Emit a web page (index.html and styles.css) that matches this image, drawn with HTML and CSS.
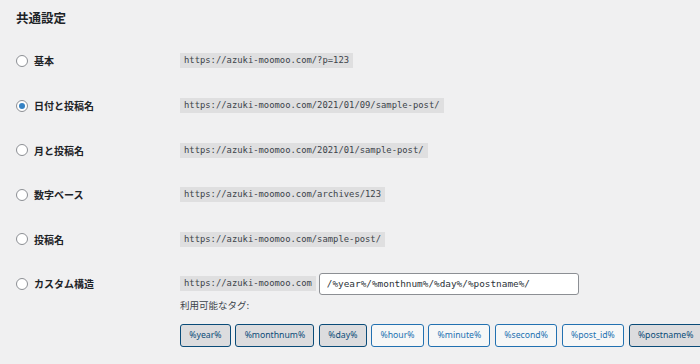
FILE: index.html
```html
<!DOCTYPE html>
<html lang="ja">

<head>
  <meta charset="UTF-8">
  <meta name="viewport" content="width=device-width, initial-scale=1.0">
  <title>パーマリンク設定</title>
  <link rel="stylesheet" href="styles.css">
</head>

<body>
  <div class="main">
    <h2 class="title">共通設定</h2>

    <div class="row">
      <label class="choice"><input type="radio" name="permalink">基本</label>
      <div class="value"><code>https://azuki-moomoo.com/?p=123</code></div>
    </div>

    <div class="row">
      <label class="choice"><input type="radio" name="permalink" checked>日付と投稿名</label>
      <div class="value"><code>https://azuki-moomoo.com/2021/01/09/sample-post/</code></div>
    </div>

    <div class="row">
      <label class="choice"><input type="radio" name="permalink">月と投稿名</label>
      <div class="value"><code>https://azuki-moomoo.com/2021/01/sample-post/</code></div>
    </div>

    <div class="row">
      <label class="choice"><input type="radio" name="permalink">数字ベース</label>
      <div class="value"><code>https://azuki-moomoo.com/archives/123</code></div>
    </div>

    <div class="row">
      <label class="choice"><input type="radio" name="permalink">投稿名</label>
      <div class="value"><code>https://azuki-moomoo.com/sample-post/</code></div>
    </div>

    <div class="row custom">
      <label class="choice"><input type="radio" name="permalink">カスタム構造</label>
      <div class="value">
        <div class="structure">
          <code>https://azuki-moomoo.com</code>
          <input class="structure-input" type="text" value="/%year%/%monthnum%/%day%/%postname%/">
        </div>
        <p class="tags-label">利用可能なタグ:</p>
        <div class="tags">
          <button class="tag active">%year%</button>
          <button class="tag active">%monthnum%</button>
          <button class="tag active">%day%</button>
          <button class="tag">%hour%</button>
          <button class="tag">%minute%</button>
          <button class="tag">%second%</button>
          <button class="tag">%post_id%</button>
          <button class="tag active">%postname%</button>
        </div>
      </div>
    </div>
  </div>
</body>

</html>
```

FILE: styles.css
```css
body {
  margin: 0;
  background: #f0f0f1;
  color: #1d2327;
  font-family: "Noto Sans CJK JP", "Noto Sans", sans-serif;
}

.main {
  padding: 0 0 0 16px;
}

.title {
  margin: 0 0 2.7px;
  line-height: 36px;
  font-size: 12.5px;
  font-weight: bold;
}

.row {
  display: grid;
  grid-template-columns: 164px 1fr;
  height: 44.6px;
  align-items: center;
}

.value {
  display: flex;
  flex-direction: column;
  align-items: flex-start;
}

.choice {
  display: flex;
  align-items: center;
  gap: 6px;
  font-size: 10px;
  font-weight: bold;
}

.choice input {
  appearance: none;
  margin: 0;
  width: 12px;
  height: 12px;
  border: 1px solid #8c8f94;
  border-radius: 50%;
  background: #fff;
  display: grid;
  place-items: center;
}

.choice input:checked::before {
  content: "";
  width: 6px;
  height: 6px;
  border-radius: 50%;
  background: #3582c4;
}

code {
  display: block;
  padding: 0 4px;
  height: 15px;
  line-height: 15px;
  background: #dfdfe0;
  color: #3c434a;
  font-family: "DejaVu Sans Mono", monospace;
  font-size: 8.85px;
}

.custom {
  height: auto;
  align-items: start;
  padding-top: 11.3px;
}

.custom .choice {
  height: 22px;
}

.structure {
  display: flex;
  align-items: center;
  gap: 3px;
  height: 22px;
}

.structure-input {
  box-sizing: border-box;
  width: 260px;
  height: 22px;
  margin: 0;
  padding: 0 7px;
  border: 1px solid #8c8f94;
  border-radius: 3px;
  background: #fff;
  color: #2c3338;
  font-family: "DejaVu Sans Mono", monospace;
  font-size: 9.4px;
}

.tags-label {
  margin: 3px 0 0;
  line-height: 14px;
  font-size: 9.5px;
  color: #3c434a;
}

.tags {
  display: flex;
  gap: 4.5px;
  margin-top: 12px;
}

.tag {
  height: 23px;
  margin: 0;
  padding: 0 8.3px;
  border: 1px solid #2271b1;
  border-radius: 3px;
  background: #f6f7f7;
  color: #2271b1;
  font-family: "Noto Sans", sans-serif;
  font-size: 8.7px;
}

.tag.active {
  background: #dcdcde;
  border-color: #0a4b78;
  color: #0a4b78;
}
```
